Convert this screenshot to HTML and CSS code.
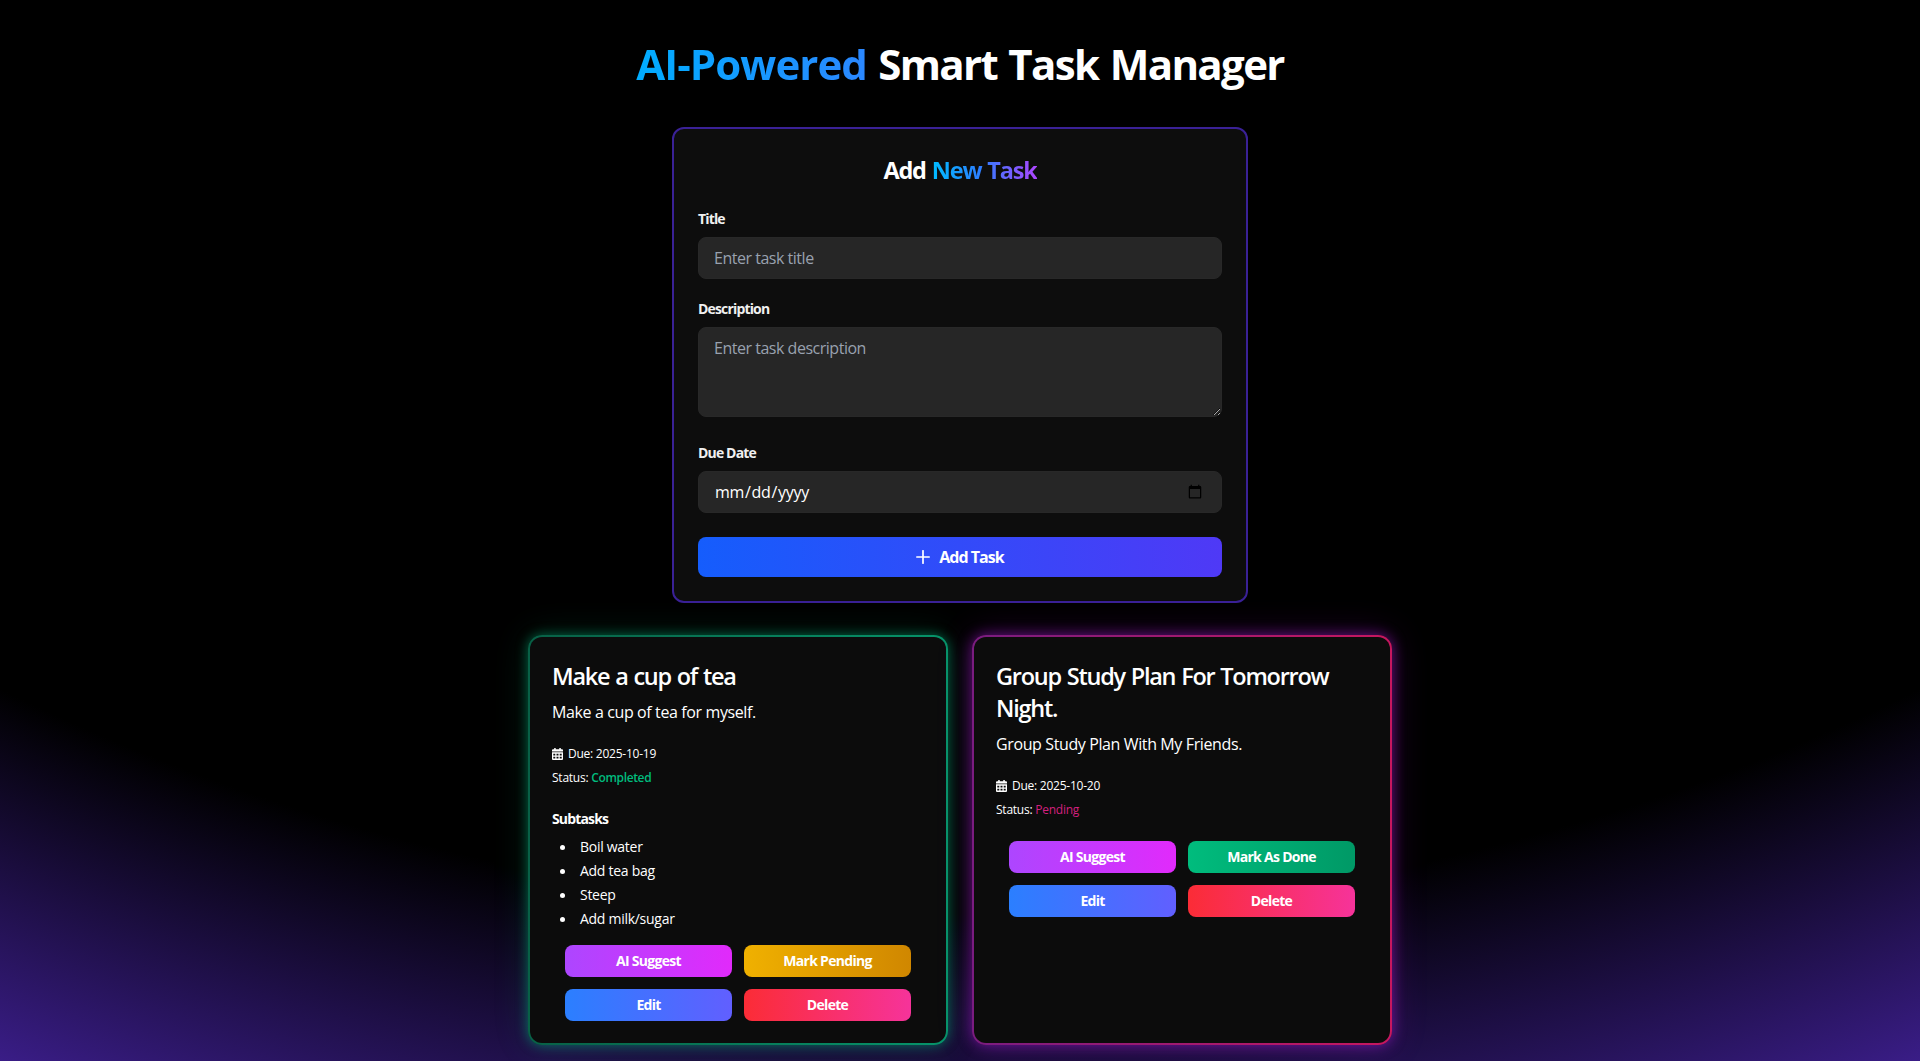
FILE: index.html
```html
<!DOCTYPE html>
<html lang="en">
<head>
<meta charset="utf-8">
<title>Smart Task Manager</title>
<link rel="stylesheet" href="styles.css">
</head>
<body>
<svg class="defs" aria-hidden="true">
  <symbol id="calendar" viewBox="0 0 11 12">
    <path fill="currentColor" fill-rule="evenodd" d="M2.2 0h1.5v1.3h3.6V0h1.5v1.3H10a1 1 0 0 1 1 1v1.2H0V2.300a1 1 0 0 1 1-1h1.200zM0 4.300h11V11a1 1 0 0 1-1 1H1a1 1 0 0 1-1-1zM1.300 5.700v1.700h2V5.700zM4.500 5.700v1.700h2V5.700zM7.700 5.700v1.700h2V5.700zM1.300 8.700v1.700h2V8.700zM4.500 8.700v1.700h2V8.700zM7.700 8.700v1.700h2V8.700z"/>
  </symbol>
</svg>
<main class="page">
  <h1 class="page-title"><span class="brand">AI-Powered</span> Smart Task Manager</h1>

  <form class="form-card">
    <h2 class="form-title">Add <span class="accent">New Task</span></h2>
    <label class="label" for="title">Title</label>
    <input class="field" id="title" type="text" placeholder="Enter task title">
    <label class="label" for="description">Description</label>
    <textarea class="field area" id="description" placeholder="Enter task description"></textarea>
    <label class="label" for="due">Due Date</label>
    <input class="field date" id="due" type="date">
    <button class="submit" type="button">
      <svg class="plus" viewBox="0 0 14 14"><path d="M7 0.800v12.400M0.800 7h12.400" fill="none" stroke="currentColor" stroke-width="1.700" stroke-linecap="round"/></svg>
      <span>Add Task</span>
    </button>
  </form>

  <section class="tasks">
    <article class="task done">
      <h3 class="task-title">Make a cup of tea</h3>
      <p class="task-text">Make a cup of tea for myself.</p>
      <p class="meta due"><svg class="cal"><use href="#calendar"/></svg><span>Due: 2025-10-19</span></p>
      <p class="meta"><span>Status:</span> <strong class="state-done">Completed</strong></p>
      <h4 class="sub-title">Subtasks</h4>
      <ul class="subtasks">
        <li>Boil water</li>
        <li>Add tea bag</li>
        <li>Steep</li>
        <li>Add milk/sugar</li>
      </ul>
      <div class="actions">
        <button class="btn suggest">AI Suggest</button>
        <button class="btn revert">Mark Pending</button>
        <button class="btn edit">Edit</button>
        <button class="btn delete">Delete</button>
      </div>
    </article>

    <article class="task pending">
      <h3 class="task-title">Group Study Plan For Tomorrow Night.</h3>
      <p class="task-text">Group Study Plan With My Friends.</p>
      <p class="meta due"><svg class="cal"><use href="#calendar"/></svg><span>Due: 2025-10-20</span></p>
      <p class="meta"><span>Status:</span> <span class="state-pending">Pending</span></p>
      <div class="actions">
        <button class="btn suggest">AI Suggest</button>
        <button class="btn complete">Mark As Done</button>
        <button class="btn edit">Edit</button>
        <button class="btn delete">Delete</button>
      </div>
    </article>
  </section>
</main>
</body>
</html>
```
FILE: styles.css
```css
* { box-sizing: border-box; margin: 0; padding: 0; }

html { background: #000; overflow: hidden; }

body {
  min-height: 1061px;
  background: radial-gradient(circle 2780px at 50% -1268px, #000 78.4%, #6633ee 100%);
  color: #fff;
  font-family: "Open Sans", "Noto Sans", sans-serif;
}

button, input, textarea { font: inherit; color: inherit; border: 0; outline: 0; }

.defs { position: absolute; width: 0; height: 0; }

.page {
  width: 864px;
  margin: 0 auto;
  padding: 36px 0 16px;
}

.page-title {
  font-size: 42px;
  line-height: 56px;
  font-weight: 700;
  letter-spacing: -0.039em;
  word-spacing: 2px;
  text-align: center;
  white-space: nowrap;
}

.brand, .accent {
  background-clip: text;
  -webkit-background-clip: text;
  color: transparent;
}

.brand { background-image: linear-gradient(90deg, #00adff, #2b87ff); letter-spacing: -0.022em; }
.accent { background-image: linear-gradient(90deg, #00bcff, #2b7fff 45%, #ad46ff); }

.form-card {
  display: flex;
  flex-direction: column;
  width: 576px;
  margin: 35px auto 0;
  padding: 25px 24px 24px;
  border: 2px solid #3a2196;
  border-radius: 12px;
  background: #0d0d0d;
}

.form-title {
  margin-bottom: 23px;
  font-size: 23.5px;
  line-height: 32px;
  font-weight: 700;
  letter-spacing: -0.05em;
  word-spacing: 1px;
  text-align: center;
}

.label {
  margin-bottom: 8px;
  font-size: 14px;
  line-height: 20px;
  font-weight: 700;
  letter-spacing: -0.06em;
  color: #f0f0f0;
}

.field {
  height: 42px;
  margin-bottom: 20px;
  padding: 8px 16px 8px 15px;
  border: 1px solid #282828;
  border-radius: 8px;
  background: #262626;
  font-size: 16px;
  line-height: 24px;
  letter-spacing: -0.02em;
}

.field::placeholder { color: #99a1af; opacity: 1; letter-spacing: -0.03em; }
.area { height: 90px; margin-bottom: 26px; resize: vertical; }
.date { margin-bottom: 24px; }

.submit {
  display: flex;
  align-items: center;
  justify-content: center;
  gap: 9px;
  height: 40px;
  border-radius: 8px;
  background: linear-gradient(90deg, #155dfc, #4f39f6);
  font-size: 16px;
  line-height: 24px;
  font-weight: 700;
  letter-spacing: -0.06em;
}

.plus { width: 14px; height: 14px; }

.tasks {
  display: grid;
  grid-template-columns: 1fr 1fr;
  gap: 24px;
  margin-top: 32px;
}

.task {
  height: 410px;
  padding: 23px 22px 21px;
  border: 2px solid transparent;
  border-radius: 14px;
}

.done {
  background: linear-gradient(#0c0c0c, #0c0c0c) padding-box, linear-gradient(90deg, #086046, #06946a) border-box;
  box-shadow: 0 0 12px rgba(0, 188, 125, 0.5), 0 0 36px rgba(0, 188, 125, 0.16);
}

.pending {
  background: linear-gradient(#0c0c0c, #0c0c0c) padding-box, linear-gradient(90deg, #7a1c80, #c7175f) border-box;
  box-shadow: 0 0 14px rgba(173, 30, 220, 0.55), 0 0 36px rgba(173, 30, 220, 0.2);
}

.task-title {
  font-size: 23.5px;
  line-height: 32px;
  font-weight: 600;
  letter-spacing: -0.053em;
  word-spacing: 1px;
}

.task-text {
  margin: 8px 0 22px;
  font-size: 16px;
  line-height: 24px;
  letter-spacing: -0.024em;
}

.meta {
  margin-bottom: 8px;
  font-size: 12px;
  line-height: 16px;
  letter-spacing: -0.02em;
}

.due { display: flex; align-items: center; gap: 5px; }
.cal { width: 11px; height: 12px; }
.state-done { font-weight: 600; letter-spacing: -0.03em; color: #00bc7d; }
.state-pending { color: #d4207f; }

.sub-title {
  margin: 23px 0 8px;
  font-size: 14px;
  line-height: 20px;
  font-weight: 700;
  letter-spacing: -0.06em;
}

.subtasks {
  display: grid;
  gap: 4px;
  list-style: none;
  font-size: 14px;
  line-height: 20px;
  letter-spacing: -0.02em;
}

.subtasks li { display: flex; align-items: center; gap: 15px; padding-left: 8px; }
.subtasks li::before { content: ""; width: 5px; height: 5px; border-radius: 50%; background: #fff; }

.actions {
  display: grid;
  grid-template-columns: 1fr 1fr;
  gap: 12px;
  margin: 16px 13px 0;
}

.pending .actions { margin-top: 23px; }

.btn {
  height: 32px;
  border-radius: 8px;
  font-size: 14px;
  line-height: 20px;
  font-weight: 700;
  letter-spacing: -0.05em;
}

.suggest { background: linear-gradient(90deg, #ad46ff, #e12afb); }
.revert { background: linear-gradient(90deg, #f0b100, #d08700); }
.complete { background: linear-gradient(90deg, #00bc7d, #009966); }
.edit { background: linear-gradient(90deg, #2b7fff, #615fff); }
.delete { background: linear-gradient(90deg, #fb2c36, #f6339a); }
```
